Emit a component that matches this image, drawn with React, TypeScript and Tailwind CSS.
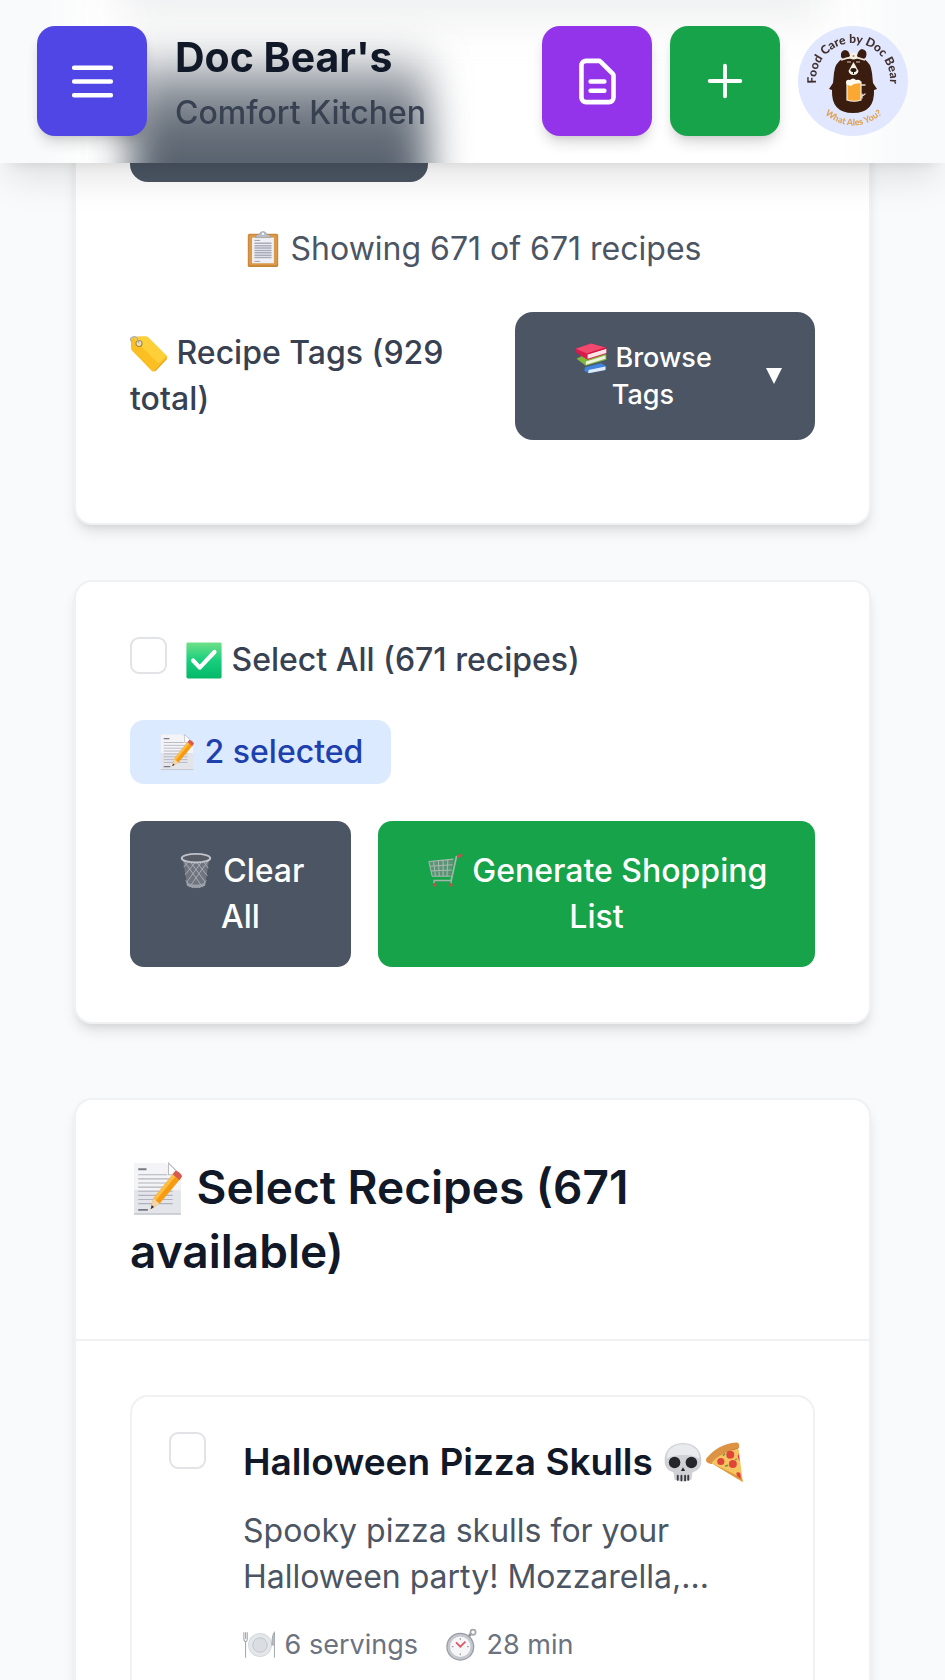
import type { ReactNode } from "react";

const small = "inline-block h-[34px] w-[34px] align-[-8px]";
const base = "inline-block h-[38px] w-[38px] align-[-8px]";
const medium = "inline-block h-[42px] w-[42px] align-[-8px]";
const large = "inline-block h-[55px] w-[55px] align-[-12px]";

function Glyph({ size, children }: { size: string; children: ReactNode }) {
  return (
    <svg viewBox="0 0 40 40" className={size} aria-hidden="true">
      {children}
    </svg>
  );
}

function Clipboard() {
  return (
    <Glyph size={base}>
      <rect x="4" y="4" width="32" height="35" rx="2" fill="#c98435" />
      <rect x="5" y="5" width="30" height="32" rx="1.5" fill="#d9994a" />
      <rect x="8.5" y="8" width="23" height="27" fill="#eef0f6" />
      <path d="M11 11h6M11 33h6" stroke="#9a9ca8" strokeWidth="1" />
      <path d="M11 14h18M11 16.5h18M11 19h18M11 21.5h18M11 24h18M11 26.5h18M11 29h18" stroke="#a9abb8" strokeWidth="1.5" />
      <path d="M12 8q0-3 4-3.5Q17 1.5 20 1.5T24 4.5Q28 5 28 8Z" fill="#b9bdc7" stroke="#8e929d" strokeWidth=".5" />
      <circle cx="20" cy="4" r="1.2" fill="#fff" />
    </Glyph>
  );
}

function Tag() {
  return (
    <Glyph size={base}>
      <path d="M1 5.5 4 3l12-.5q2 0 3.5 1.5L38.5 23q1.5 1.5 0 3L26 39q-1.5 1.2-3 0L2.5 18Q1 16.5 1 14.5Z" fill="#fbbf24" />
      <path d="M4 3l12-.5q2 0 3.5 1.5L38.5 23 30 31 6 7Z" fill="#fdd03a" />
      <path d="M26 39 38.5 26" stroke="#e8a010" strokeWidth="1.2" />
      <circle cx="9.5" cy="10" r="3.2" fill="#eee2c0" stroke="#a88a3c" strokeWidth="1.2" />
      <path d="M9.5 10Q8 2 3.5 3T1.5 8" fill="none" stroke="#a9aeb8" strokeWidth="1.3" />
    </Glyph>
  );
}

function Books() {
  return (
    <Glyph size={small}>
      <path d="M13 31 32 26l6 4-1 4-20 4-5-3Z" fill="#3f83dc" />
      <path d="m17 34 20-4v4l-20 4Z" fill="#dceafb" />
      <path d="M3 21 14 29l24-7v-6L20 12Z" fill="#80b83a" />
      <path d="m14 24 23-7v4l-23 7Z" fill="#eef3df" />
      <path d="M2 9 20 3l18 5v7l-22 7L3 14Z" fill="#d81b4a" />
      <path d="M2 9 20 3l18 5-22 7Z" fill="#f0486e" />
      <path d="m16 16 22-7v5l-22 7Z" fill="#fbe4e8" />
      <path d="M16 15 38 8" stroke="#ce1540" strokeWidth="1.5" />
    </Glyph>
  );
}

function CheckMark() {
  return (
    <Glyph size={base}>
      <defs>
        <linearGradient id="check-fill" x2="0" y2="1">
          <stop stopColor="#6fe087" />
          <stop offset=".5" stopColor="#18cf7d" />
          <stop offset="1" stopColor="#04b868" />
        </linearGradient>
      </defs>
      <rect x="1.5" y="1.5" width="37" height="38" rx="1.5" fill="url(#check-fill)" />
      <path d="m8.5 20.5 7 7.5L31 11.5" fill="none" stroke="#fff" strokeWidth="4.5" strokeLinecap="round" strokeLinejoin="round" />
    </Glyph>
  );
}

function Memo({ size }: { size: string }) {
  return (
    <Glyph size={size}>
      <path d="M3 1.5h22L37 11v27.5H3Z" fill="#e4e5ea" />
      <path d="M3 1.5h22L37 11v10H3Z" fill="#f4f4f7" />
      <path d="M28 1.5V10h8.5Z" fill="#fff" stroke="#b9bbc4" strokeWidth=".8" />
      <path d="M6 6h6M6 35.5h7" stroke="#777a84" strokeWidth="1.3" />
      <path d="M6 10h21M6 13h25M6 16h25M6 19h25M6 22h25M6 25h25M6 28h25M6 31h25" stroke="#b0b3bd" strokeWidth=".9" />
      <path d="M3 38.5h34" stroke="#c3c5cd" strokeWidth="1" />
      <path d="m15 35 2-8L32 8.5l5 4L21.5 31Z" fill="#f79b13" />
      <path d="m17 27 15-18.5 2 1.5L19 28.5Z" fill="#ffbe45" />
      <path d="m15 35 2-8 4.5 4Z" fill="#f4d4a4" />
      <path d="m15 35 .8-3 1.7 1.5Z" fill="#333" />
      <path d="M31 9.7 33 7q3 .5 5 4l-2 2.8Z" fill="#d95a4f" />
    </Glyph>
  );
}

function Bin() {
  return (
    <Glyph size={base}>
      <path d="m6 7 4.5 28q9.5 6 19 0L34 7Z" fill="#6f747e" />
      <path d="m7 9 20 28M13 9l17 23M20 10l12 15M27 9l6 8M33 9 13 37M27 9 10 32M20 10 8.5 24M13 9l-6 7M9 30l8 8M31 30l-8 8" stroke="#a9adb5" strokeWidth="1" fill="none" />
      <path d="M10 32q10 5 20 0l-.5 3.5q-9.5 5-19 0Z" fill="#9ba0a9" />
      <ellipse cx="20" cy="6.5" rx="15" ry="4.5" fill="#565b64" stroke="#bfc3c9" strokeWidth="2" />
    </Glyph>
  );
}

function Cart() {
  return (
    <Glyph size={base}>
      <path d="m3 10 26-2.5-3 18H6.5Z" fill="#5b9474" />
      <path d="m3 10 26-2.5M4 15l24-1.5M5 20l22-1M6.5 25.5H26M8 10l2 15.5M13 9.5l1 16M18 9v16.5M23 8.5l-1 17M3 10l3.5 15.5" fill="none" stroke="#a9b9b0" strokeWidth="1.1" />
      <path d="m36 4-4 1-5.5 25H8" fill="none" stroke="#a8b3ad" strokeWidth="1.8" />
      <path d="m34 4.5 3-1" stroke="#b9544f" strokeWidth="3" strokeLinecap="round" />
      <path d="m9 30-1 3M26.5 30v3" stroke="#a8b3ad" strokeWidth="1.5" />
      <circle cx="9" cy="34.5" r="2" fill="#b9544f" />
      <circle cx="26" cy="34.5" r="2" fill="#b9544f" />
    </Glyph>
  );
}

function Skull() {
  return (
    <Glyph size={medium}>
      <path d="M20 2C8 2 2 10 2.5 20c.3 6 4.5 8.5 8.5 10l1 7q8 3 16 0l1-7c4-1.500 8.200-4 8.500-10C38 10 32 2 20 2Z" fill="#cfd1d6" />
      <path d="M20 3C10 3 4 9 4.5 17 9 12 31 12 35.5 17 36 9 30 3 20 3Z" fill="#e9eaed" />
      <circle cx="12" cy="20.5" r="5.5" fill="#24262b" />
      <circle cx="28" cy="20.5" r="5.5" fill="#24262b" />
      <path d="m20 25-2 3.5h4Z" fill="#24262b" />
      <path d="M15 33v4M18.5 33v4.5M22 33v4.5M25 33v4" stroke="#383a40" strokeWidth="1.8" strokeLinecap="round" />
    </Glyph>
  );
}

function Pizza() {
  return (
    <Glyph size={medium}>
      <path d="M3 18Q14 3 32 2l1 5L7 22Z" fill="#c97a31" />
      <path d="M2 17Q13 3 31 1.5q3 0 2.5 5Q17 9 7 22 1 21 2 17Z" fill="#dc9344" />
      <path d="M7 21Q17 9 33 7.5L37 39Z" fill="#f6c561" />
      <path d="m7 21 30 18-1-4Z" fill="#dd9a3f" />
      <circle cx="25" cy="13" r="3.8" fill="#e0453c" />
      <circle cx="16" cy="19.5" r="3.4" fill="#e0453c" />
      <circle cx="27.5" cy="22" r="3.8" fill="#e0453c" />
      <path d="M31 30q4-1 4 3v3q-5-3-4-6ZM33 12l1 7q-3-3-1-7Z" fill="#e0453c" />
      <path d="m20 24 3-1M20 12l-2 2M30 17l1 1" stroke="#6f9a3e" strokeWidth="1.5" />
    </Glyph>
  );
}

function Plate() {
  return (
    <Glyph size={small}>
      <circle cx="20" cy="20" r="14" fill="#d3d7dc" />
      <circle cx="20" cy="20" r="13" fill="#e4e7ea" />
      <circle cx="20" cy="20" r="8.5" fill="#dadee2" stroke="#bcc1c7" strokeWidth="1" />
      <path d="M1 5v8q0 3 2 3v19M5 5v8q0 3-2 3M3 5v8" stroke="#a6abb2" strokeWidth="1.3" fill="none" />
      <path d="M37 35V5q-3 3-3 15h3" fill="#b8bdc3" stroke="#a6abb2" strokeWidth="1.2" />
    </Glyph>
  );
}

function Stopwatch() {
  return (
    <Glyph size={small}>
      <path d="m28 10 3-4" stroke="#8d9097" strokeWidth="3" />
      <circle cx="33" cy="5" r="3" fill="none" stroke="#a4a8ae" strokeWidth="2" />
      <circle cx="18" cy="22" r="16.5" fill="#9a9da4" />
      <circle cx="18" cy="22" r="15" fill="#c4c7cd" />
      <circle cx="18" cy="22" r="12" fill="#f6f6f8" />
      <path d="M18 12v2M18 30v2M8 22h2M26 22h2" stroke="#777" strokeWidth="1" />
      <path d="m13 17 5 5 6-6" fill="none" stroke="#e05562" strokeWidth="2" />
    </Glyph>
  );
}

function BearLogo() {
  return (
    <svg viewBox="0 0 110 110" className="h-[110px] w-[110px]" role="img" aria-label="Food Care by Doc Bear">
      <circle cx="55" cy="55" r="55" fill="#e0e7ff" />
      <defs>
        <path id="logo-top" d="M19 62Q18 58 18 54A37 37 0 0 1 92 54Q92 58 91 62" />
        <path id="logo-bottom" d="M22 84Q55 115 89 84" />
      </defs>
      <text className="font-['Lato',sans-serif] text-[12px] font-black" fill="#41302f">
        <textPath href="#logo-top" startOffset="50%" textAnchor="middle">Food Care by Doc Bear</textPath>
      </text>
      <text className="font-['Lato',sans-serif] text-[9px] font-black" fill="#dfa45a">
        <textPath href="#logo-bottom" startOffset="50%" textAnchor="middle">What Ales You?</textPath>
      </text>
      <path d="M44 33q6-2 11-2t11 2q7 4 8 14l1 10 4 6-3 1q1 23-21 23T34 64l-3-1 4-6 1-10q1-10 8-14Z" fill="#3b1d10" />
      <path d="M43 31q-1-6 4-7 4 0 5 6l-6 4ZM59 30q1-6 5-7 6 1 4 8l-4 4Z" fill="#3b1d10" />
      <path d="M43 34q12-5 24 0" fill="none" stroke="#f1e9df" strokeWidth="1.8" />
      <circle cx="55.5" cy="30" r="3.5" fill="#f6f1e7" />
      <circle cx="55.5" cy="30" r="1" fill="#b98555" />
      <path d="M49 36h4M58 36h4" stroke="#d9cfc3" strokeWidth="1" />
      <path d="m55.5 36-5 9q1 4 5 4t5-4Z" fill="#f6f1e7" />
      <ellipse cx="55.5" cy="44" rx="3" ry="2" fill="#2a140b" />
      <path d="M55.5 45v3" stroke="#2a140b" strokeWidth="1" />
      <path d="M49 56h14v18q-7 2.5-14 0Z" fill="#faa832" stroke="#f6eee2" strokeWidth="1.2" />
      <path d="M48 57q0-4 4-3 3-3 6 0 5-1 5 3l-7 1-3 2-4-1Z" fill="#fffaf0" />
      <path d="M63 59h4M63 71l4-3M64 68v4" stroke="#eadfd0" strokeWidth="1.3" strokeLinecap="round" />
    </svg>
  );
}

const iconButton =
  "flex h-[110px] w-[110px] shrink-0 items-center justify-center rounded-[18px] text-white shadow-[0_9px_14px_-2px_rgba(0,0,0,0.14),0_5px_9px_-5px_rgba(0,0,0,0.12)]";
const card =
  "rounded-[18px] border-2 border-[#f0f1f3] bg-white shadow-[0_9px_14px_-2px_rgba(0,0,0,0.1),0_5px_9px_-5px_rgba(0,0,0,0.1)]";
const checkbox =
  "h-[37px] w-[37px] shrink-0 appearance-none rounded-[9px] border-2 border-[#e1e3e7] bg-white checked:border-[#4f46e5] checked:bg-[#4f46e5]";

function FrostedBackdrop() {
  return (
    <div aria-hidden="true" className="absolute inset-0 -z-10 overflow-hidden bg-[#f9fafb]">
      <div className="absolute inset-x-[74px] -inset-y-[60px] bg-white blur-[26px]" />
      <div className="absolute inset-x-[120px] -top-[44px] h-[64px] bg-[#eeeff0] blur-[22px]" />
      <div className="absolute top-[56px] left-[130px] h-[180px] w-[298px] bg-linear-to-b from-[#5a636f]/30 via-[#5a636f]/90 via-35% to-[#525d69] to-70% blur-[20px]" />
    </div>
  );
}

function Header() {
  return (
    <header className="fixed inset-x-0 top-0 isolate z-10 flex items-start gap-[18px] px-[37px] pt-[26px] pb-[23px] shadow-[0_23px_34px_-7px_rgba(0,0,0,0.1),0_9px_14px_-9px_rgba(0,0,0,0.1)]">
      <FrostedBackdrop />
      <button type="button" aria-label="Open menu" className={`${iconButton} bg-[#4f46e5]`}>
        <svg viewBox="0 0 24 24" className="h-[55px] w-[55px]" fill="none" stroke="currentColor" strokeWidth="2" strokeLinecap="round">
          <path d="M4 6h16M4 12h16M4 18h16" />
        </svg>
      </button>
      <div className="flex-1 pt-[4px] pl-[10px]">
        <h1 className="text-[41px] leading-[55px] font-bold text-[#111827]">Doc Bear's</h1>
        <p className="text-[32px] leading-[55px] font-medium text-[#374151]">Comfort Kitchen</p>
      </div>
      <button type="button" aria-label="Recipe notes" className={`${iconButton} bg-[#9333ea]`}>
        <svg viewBox="0 0 24 24" className="h-[55px] w-[55px]" fill="none" stroke="currentColor" strokeWidth="2" strokeLinecap="round" strokeLinejoin="round">
          <path d="M9 12h6m-6 4h6m2 5H7a2 2 0 0 1-2-2V5a2 2 0 0 1 2-2h5.586a1 1 0 0 1 .707.293l5.414 5.414a1 1 0 0 1 .293.707V19a2 2 0 0 1-2 2z" />
        </svg>
      </button>
      <button type="button" aria-label="Add recipe" className={`${iconButton} bg-[#16a34a]`}>
        <svg viewBox="0 0 24 24" className="h-[46px] w-[46px]" fill="none" stroke="currentColor" strokeWidth="2" strokeLinecap="round">
          <path d="M12 4v16m8-8H4" />
        </svg>
      </button>
      <a href="#home" className="shrink-0">
        <BearLogo />
      </a>
    </header>
  );
}

export default function App() {
  return (
    <div className="h-screen overflow-hidden bg-[#f9fafb] font-['Inter',sans-serif] text-[32px] leading-[46px]">
      <Header />
      <main className="px-[74px]">
        <section className={`${card} -mt-[20px] px-[54px] pt-[90px] pb-[83px]`}>
          <button type="button" aria-label="Filters" className="block h-[110px] w-[298px] rounded-[18px] bg-[#4b5563]" />
          <p className="mt-[44px] text-center text-[#4b5563]">
            <Clipboard /> Showing 671 of 671 recipes
          </p>
          <div className="mt-[40px] flex items-center justify-between">
            <h2 className="w-[340px] font-medium text-[#374151]">
              <Tag /> Recipe Tags (929 total)
            </h2>
            <button type="button" className="flex w-[300px] items-center gap-[31px] rounded-[18px] bg-[#4b5563] py-[27px] pr-[32px] pl-[37px] text-[27px] leading-[37px] font-medium text-white">
              <span className="flex-1">
                <Books /> Browse Tags
              </span>
              <svg viewBox="0 0 18 18" className="h-[18px] w-[18px]" fill="currentColor" aria-hidden="true">
                <path d="M1 1h16L9 17z" />
              </svg>
            </button>
          </div>
        </section>

        <section className={`${card} mt-[55px] px-[54px] py-[55px]`}>
          <div className="flex items-start gap-[18px]">
            <input id="select-all" type="checkbox" className={checkbox} />
            <label htmlFor="select-all" className="font-medium text-[#374151]">
              <CheckMark /> Select All (671 recipes)
            </label>
          </div>
          <p className="mt-[37px] w-fit rounded-[14px] bg-[#dbeafe] px-[28px] py-[9px] font-medium text-[#1e40af]">
            <Memo size={base} /> 2 selected
          </p>
          <div className="mt-[37px] flex gap-[27px] font-medium text-white">
            <button type="button" className="w-[221px] rounded-[14px] bg-[#4b5563] px-[40px] py-[27px]">
              <Bin /> Clear All
            </button>
            <button type="button" className="flex-1 rounded-[14px] bg-[#16a34a] px-[37px] py-[27px]">
              <Cart /> Generate Shopping List
            </button>
          </div>
        </section>

        <section className={`${card} mt-[74px]`}>
          <h2 className="border-b-2 border-[#f0f1f3] px-[54px] pt-[55px] pb-[56px] text-[46px] leading-[64px] font-semibold text-[#111827]">
            <Memo size={large} /> Select Recipes (671 available)
          </h2>
          <div className="p-[54px]">
            <article className="flex items-start gap-[37px] rounded-[18px] border-2 border-[#f0f1f3] px-[37px] py-[35px]">
              <input id="recipe-1" type="checkbox" className={checkbox} />
              <div className="flex-1">
                <h3 className="text-[37px] leading-[60px] font-semibold text-[#111827]">
                  <label htmlFor="recipe-1">Halloween Pizza Skulls </label>
                  <span className="whitespace-nowrap">
                    <Skull />
                    <Pizza />
                  </span>
                </h3>
                <p className="mt-[16px] text-[#4b5563]">
                  Spooky pizza skulls for your Halloween party! Mozzarella,...
                </p>
                <div className="mt-[22px] flex gap-[27px] text-[27px] leading-[46px] text-[#6b7280]">
                  <span><Plate /> 6 servings</span>
                  <span><Stopwatch /> 28 min</span>
                </div>
              </div>
            </article>
          </div>
        </section>
      </main>
    </div>
  );
}
